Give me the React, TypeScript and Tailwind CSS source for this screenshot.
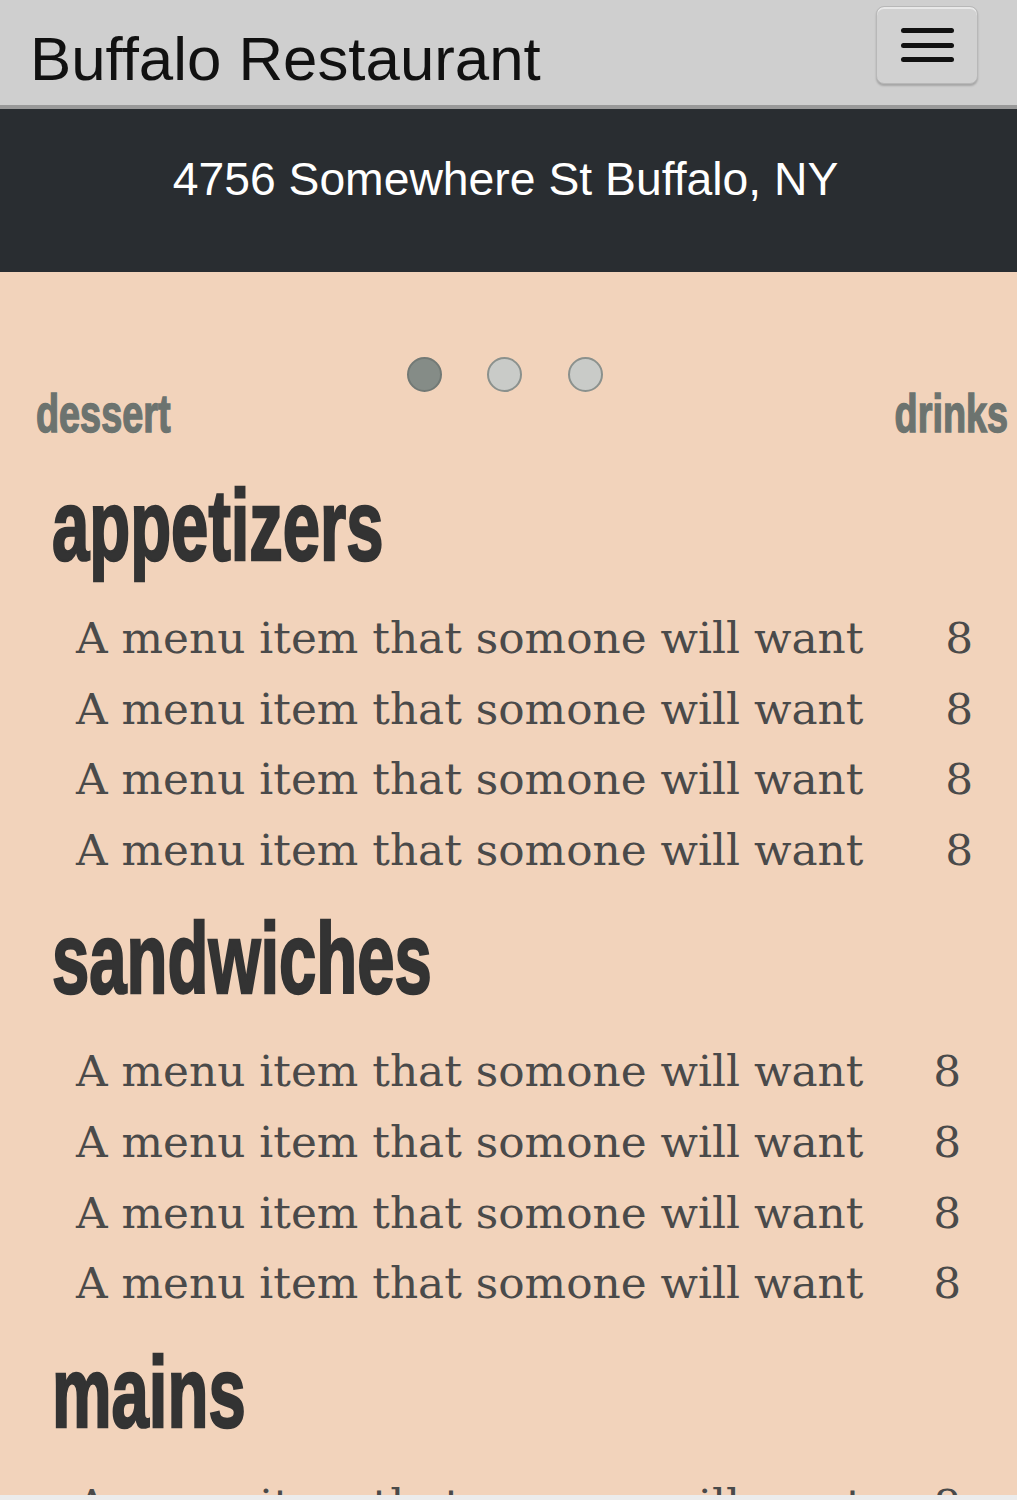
import React from "react";

const serif = { fontFamily: "'DejaVu Serif', 'Liberation Serif', serif" };
const sans = { fontFamily: "'Liberation Sans', Arial, sans-serif" };

type Section = { title: string; items: string[]; pr: string; first?: boolean };

const sections: Section[] = [
  { title: "appetizers", items: Array(4).fill("A menu item that somone will want"), pr: "pr-[44px]", first: true },
  { title: "sandwiches", items: Array(4).fill("A menu item that somone will want"), pr: "pr-[56px]" },
  { title: "mains", items: Array(4).fill("A menu item that somone will want"), pr: "pr-[56px]" },
];

const MenuSection: React.FC<{ section: Section }> = ({ section }) => (
  <div className={section.first ? "" : "mt-[23px]"}>
    <h2
      className="pl-[52px] text-[100px] leading-none font-bold text-[#333333] mb-[28px] [-webkit-text-stroke:2.5px_#333333]"
      style={sans}
    >
      <span className="inline-block origin-left scale-x-[0.67]">{section.title}</span>
    </h2>
    <ul>
      {section.items.map((item, i) => (
        <li
          key={i}
          className={`flex justify-between pl-[76px] ${section.pr} text-[43.8px] leading-[70.6px] text-[#4a4a4a]`}
          style={serif}
        >
          <span>{item}</span>
          <span>8</span>
        </li>
      ))}
    </ul>
  </div>
);

export default function App() {
  return (
    <div className="h-screen flex flex-col overflow-hidden bg-[#f2d3bb]">
      {/* Navbar */}
      <nav className="shrink-0 h-[109px] flex items-start justify-between bg-[#cfcfcf] border-b-4 border-[#999999] pl-[30px] pr-[39px]">
        <span className="mt-[28px] text-[61.8px] leading-none text-[#111111]" style={sans}>
          Buffalo Restaurant
        </span>
        <button className="mt-[6px] w-[102px] h-[78px] flex flex-col items-center justify-center gap-[9.5px] rounded-[8px] border border-[#b8b8b8] bg-[#d1d1d1] shadow-[inset_0_2px_0_rgba(255,255,255,0.5),0_2px_2px_rgba(0,0,0,0.2)]">
          <span className="block w-[53px] h-[5px] rounded-full bg-[#111111]" />
          <span className="block w-[53px] h-[5px] rounded-full bg-[#111111]" />
          <span className="block w-[53px] h-[5px] rounded-full bg-[#111111]" />
        </button>
      </nav>

      {/* Address */}
      <div className="shrink-0 h-[163px] bg-[#292d31] flex justify-center pt-[47px] pr-[6px]">
        <span className="text-[46.3px] leading-none text-white" style={sans}>
          4756 Somewhere St Buffalo, NY
        </span>
      </div>

      <main className="flex-1 overflow-hidden">
        {/* Carousel controls */}
        <div className="pt-[85px] pr-[8px] flex justify-center gap-[45.5px]">
          <span className="w-[35px] h-[35px] rounded-full bg-[#858c87] border-2 border-[#727975]" />
          <span className="w-[35px] h-[35px] rounded-full bg-[#c9cbc8] border-2 border-[#8b918d]" />
          <span className="w-[35px] h-[35px] rounded-full bg-[#c9cbc8] border-2 border-[#8b918d]" />
        </div>
        <div
          className="mt-[1px] flex justify-between pl-[36px] pr-[9px] text-[54px] leading-[40px] font-bold text-[#6c736f] [-webkit-text-stroke:1.5px_#6c736f]"
          style={sans}
        >
          <span className="inline-block origin-left scale-x-[0.7]">dessert</span>
          <span className="inline-block origin-right scale-x-[0.7]">drinks</span>
        </div>

        {/* Menu */}
        <div className="mt-[42px]">
          {sections.map((s) => (
            <MenuSection key={s.title} section={s} />
          ))}
        </div>
      </main>

      <div className="shrink-0 h-[5px] bg-[#ececec]" />
    </div>
  );
}
